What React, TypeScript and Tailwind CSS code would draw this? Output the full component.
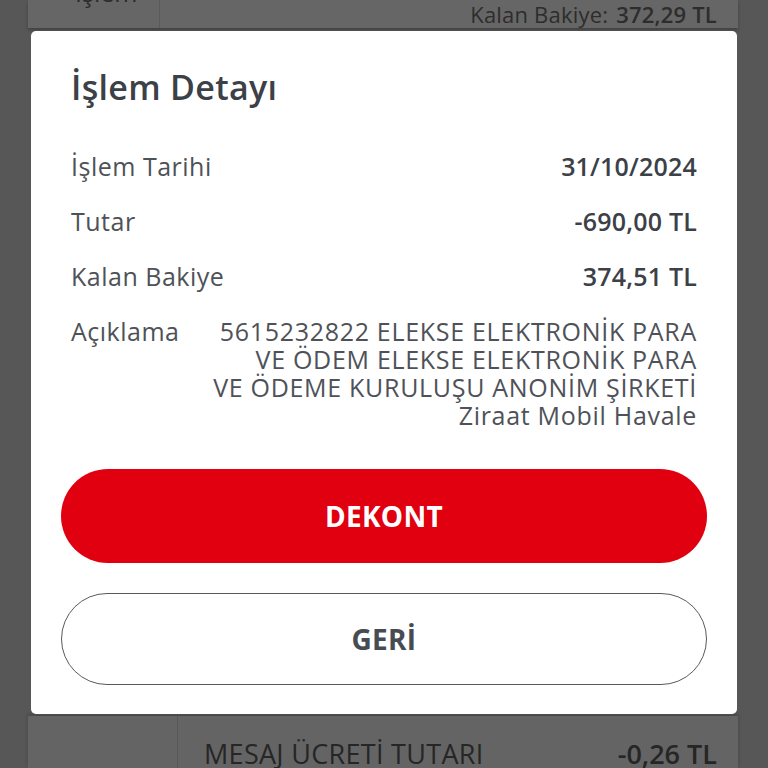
import React from "react";

export default function App() {
  const font = { fontFamily: "'Open Sans', Lato, sans-serif" };
  return (
    <div className="relative w-[768px] h-[768px] overflow-hidden bg-[#575757]" style={font}>
      {/* background page */}
      <div className="flex flex-col h-full pl-[28px] pr-[30px]">
        <div className="relative h-[28px] bg-[#666666] flex shadow-[0_2px_3px_rgba(0,0,0,0.25)]">
          <div className="w-[132px] border-r border-[#5a5a5a] relative overflow-hidden">
            <span className="absolute left-[47px] -top-[20px] text-[25px] leading-[25px] text-[#2c2c2c]">İşlem</span>
          </div>
          <div className="flex-1 flex justify-end items-center pr-[21px] text-[22px] leading-[26px] tracking-[0.2px] text-[#2d2d2d]">
            <span>Kalan Bakiye:</span>
            <span className="ml-[8px] font-semibold">372,29 TL</span>
          </div>
        </div>
        <div className="flex-1" />
        <div className="h-[52px] bg-[#646464] flex shadow-[0_-2px_4px_rgba(0,0,0,0.2)]">
          <div className="w-[150px] border-r border-[#575757]" />
          <div className="flex-1 flex justify-between items-start pt-[24px] pl-[26px] pr-[21px] text-[27px] leading-[28px] text-[#262626]">
            <span className="tracking-[0.3px]">MESAJ ÜCRETİ TUTARI</span>
            <span className="font-semibold">-0,26 TL</span>
          </div>
        </div>
      </div>

      {/* modal */}
      <div className="absolute left-[31px] top-[31px] w-[706px] h-[683px] bg-white rounded-[5px] flex flex-col">
        <div className="px-[40px] pt-[34px]">
          <h1 className="text-[34px] font-semibold tracking-[0.3px] text-[#3c4047] leading-[44px]">İşlem Detayı</h1>
        </div>
        <div className="px-[40px] mt-[43px] flex flex-col gap-[27px] text-[25px] tracking-[0.5px] text-[#4e5258] leading-[28px]">
          <div className="flex justify-between">
            <span>İşlem Tarihi</span>
            <span className="font-semibold tracking-[0.2px] text-[#3c4047]">31/10/2024</span>
          </div>
          <div className="flex justify-between">
            <span>Tutar</span>
            <span className="font-semibold tracking-[0.2px] text-[#3c4047]">-690,00 TL</span>
          </div>
          <div className="flex justify-between">
            <span>Kalan Bakiye</span>
            <span className="font-semibold tracking-[0.2px] text-[#3c4047]">374,51 TL</span>
          </div>
          <div className="flex justify-between">
            <span>Açıklama</span>
            <span className="text-right whitespace-nowrap tracking-[0.7px]">
              5615232822 ELEKSE ELEKTRONİK PARA
              <br />
              VE ÖDEM ELEKSE ELEKTRONİK PARA
              <br />
              VE ÖDEME KURULUŞU ANONİM ŞİRKETİ
              <br />
              Ziraat Mobil Havale
            </span>
          </div>
        </div>
        <div className="px-[30px] mt-[40px] flex flex-col gap-[30px]">
          <button className="h-[94px] rounded-full bg-[#e1000f] text-white text-[28px] font-bold tracking-[0.3px]">
            DEKONT
          </button>
          <button className="h-[92px] rounded-full border border-[#5a5a5a] bg-white text-[#474c53] text-[28px] font-bold tracking-[0.3px]">
            GERİ
          </button>
        </div>
      </div>
    </div>
  );
}
